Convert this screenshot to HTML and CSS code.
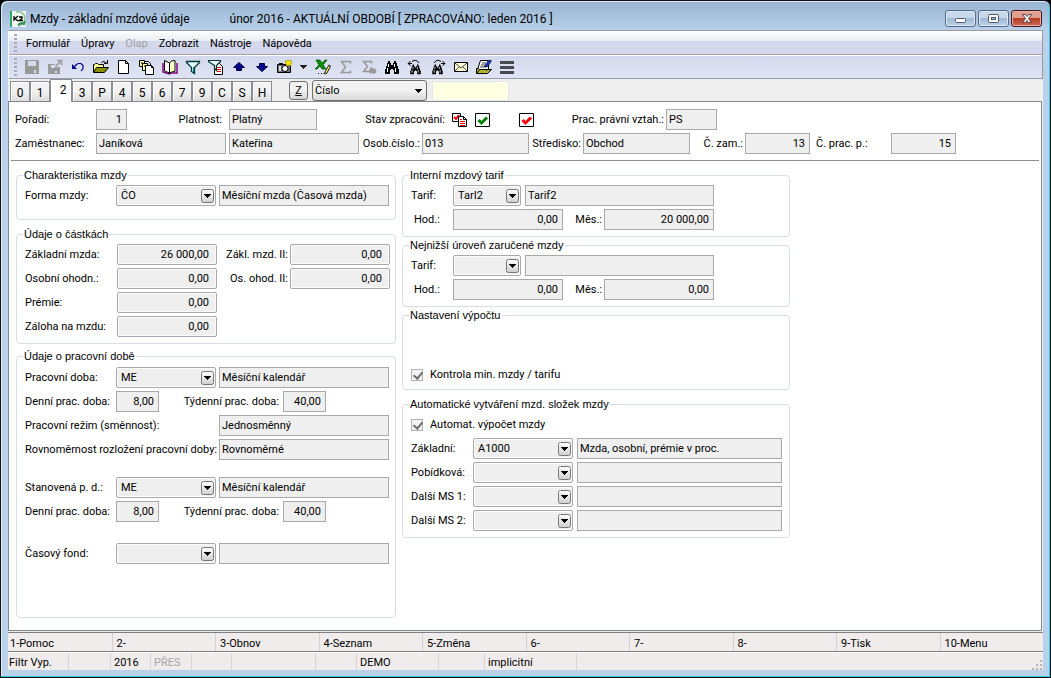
FILE: index.html
```html
<!DOCTYPE html>
<html lang="cs">
<head>
<meta charset="utf-8">
<title>Mzdy - základní mzdové údaje</title>
<link rel="stylesheet" href="styles.css">
</head>
<body>
<svg class="defs" aria-hidden="true">
  <defs>
    <linearGradient id="btn" x1="0" y1="0" x2="0" y2="1"><stop offset="0" stop-color="#fff"/><stop offset="1" stop-color="#cfcfcf"/></linearGradient>
    <symbol id="drop" viewBox="0 0 15 15"><rect x="1.500" y=".5" width="12" height="13" rx="2" fill="url(#btn)" stroke="#777" /><path d="M4 5h7v1h-1v1h-1v1h-1v1h-1v-1h-1v-1h-1v-1h-1z" fill="#000"/></symbol>
    <symbol id="bino" viewBox="0 0 16 16"><path d="M4 2h2v2h1v2h2v-2h1v-2h2v2h1v3h1v3h1v5h-5v-4h-1v-1h-2v1h-1v4h-5v-5h1v-3h1v-3h1z" fill="#000"/><path d="M4.500 5v3M3.500 9v4M10.500 5v3M11.500 9v4" stroke="#fff"/></symbol>
  </defs>
</svg>
<div class="window">
  <header class="titlebar">
    <svg class="logo" viewBox="0 0 16 16"><path d="M0 0h16v16h-16z" fill="#f4f8f5"/><path d="M0 0h2v16h-2z" fill="#2fa866"/><path d="M6 1c5-1 9 2 9 6s-2 7-7 8" fill="none" stroke="#9dc8a8" stroke-width="2"/><path d="M8 14l3-2 3 1 1-3" fill="none" stroke="#2f8f55" stroke-width="2"/><path d="M4 5v5M8 5l-3 2.500 3 2.500M9 6h3v1.500l-3 2h4" fill="none" stroke="#000" stroke-width="1.300"/></svg>
    <h1>Mzdy - základní mzdové údaje</h1>
    <span class="period">únor 2016 - AKTUÁLNÍ OBDOBÍ [ ZPRACOVÁNO: leden 2016 ]</span>
    <div class="winbtns">
      <button aria-label="Minimalizovat"><svg viewBox="0 0 29 15"><rect x="9.500" y="7.500" width="10" height="4" rx="1" fill="#fff" stroke="#555b6e"/></svg></button>
      <button aria-label="Maximalizovat"><svg viewBox="0 0 29 15"><rect x="9.500" y="3.500" width="10" height="8" rx="1" fill="#fff" stroke="#555b6e"/><rect x="12.500" y="6.500" width="4" height="2" fill="#9dbbdc" stroke="#555b6e"/></svg></button>
      <button class="close" aria-label="Zavřít"><svg viewBox="0 0 29 15"><path d="M10.500 3.500h3l1.500 2 1.500-2h3l-3 4 3 4h-3l-1.500-2-1.500 2h-3l3-4z" fill="#fff" stroke="#5a4450"/></svg></button>
    </div>
  </header>

  <div class="client">
    <div class="bars">
      <nav class="menubar">
        <i class="grip"></i>
        <button>Formulář</button><button>Úpravy</button><button disabled>Olap</button><button>Zobrazit</button><button>Nástroje</button><button>Nápověda</button>
      </nav>
      <div class="toolbar">
        <i class="grip"></i>
        <button aria-label="Uložit" disabled><svg viewBox="0 0 16 16"><path d="M1 1h13l1 1v13h-14z" fill="#999"/><path d="M4 2h8v5h-8zM10 11h2v3h-2z" fill="#d7dbee"/></svg></button>
        <button aria-label="Uložit jako" disabled><svg viewBox="0 0 16 16"><path d="M1 5h7v3h5v7h-12z" fill="#999"/><path d="M4 6h4v3h-4zM8 12h2v2h-2z" fill="#d7dbee"/><path d="M8.500 7.500l5-5M10 1.500h4.500v4.500" fill="none" stroke="#999" stroke-width="1.500"/></svg></button>
        <button aria-label="Zpět"><svg viewBox="0 0 16 16"><path d="M3 9l3-3 2-1.500h3l2 2v3l-2 2.500" fill="none" stroke="#000090" stroke-width="1.200"/><path d="M2 5v5h5z" fill="#000090"/></svg></button>
        <button aria-label="Otevřít"><svg viewBox="0 0 16 16"><path d="M.5 13.500v-8h1l1-1h2l1 1h5v3" fill="#ffff8c" stroke="#000"/><path d="M.5 13.500l3-5h12l-4 5z" fill="#8c8c00" stroke="#000"/><path d="M8.500 3.500q2-2.500 5 .5M14.500 1v3.500h-3.500" fill="none" stroke="#000"/></svg></button>
        <button aria-label="Nový"><svg viewBox="0 0 16 16"><path d="M2.500 1.500h7l3 3v10h-10z" fill="#fff" stroke="#000"/><path d="M9.500 1.500v3h3" fill="none" stroke="#000"/></svg></button>
        <button aria-label="Kopírovat"><svg viewBox="0 0 16 16"><path d="M.5 1.500h5v6h-5z" fill="#ffffa0" stroke="#000"/><path d="M3.500 4.500h5v7h-5z" fill="#ffffa0" stroke="#000"/><path d="M6.500 6.500h6l2 2v7h-8z" fill="#fff" stroke="#000"/><path d="M5.500 2.500h4l2 2v2M12.500 6.500v2h2M2 4h2M5 7h1" fill="none" stroke="#000"/></svg></button>
        <button aria-label="Kniha"><svg viewBox="0 0 16 16"><path d="M1 4v9l6 2 2-1h6v-10" fill="#fff" stroke="#800080" stroke-width="1.500"/><path d="M2.500 1.500l5 2.500v10l-5-2z" fill="#fff" stroke="#000"/><path d="M7.500 4q2-3 5.500-2.500v11q-3 0-5.500 1.500z" fill="#ffffc8" stroke="#000"/></svg></button>
        <button aria-label="Filtr"><svg viewBox="0 0 16 16"><path d="M1.500 2.500h13v1l-5 5v6l-3-2v-4l-5-5z" fill="#e8fbfb" stroke="#003838" stroke-width="1.300"/><path d="M8.500 8v5" stroke="#008080"/></svg></button>
        <button aria-label="Filtr dokladu"><svg viewBox="0 0 16 16"><path d="M6.500 4.500h5l3 3v8h-8z" fill="#fff" stroke="#000"/><path d="M9 8.500h4M9 10.500h4M9 12.500h4" stroke="#e00000"/><path d="M.5 1.500h12v1l-4 4v5l-2-2v-3l-6-4z" fill="#e8fbfb" stroke="#003838" stroke-width="1.200"/></svg></button>
        <button aria-label="Nahoru"><svg viewBox="0 0 16 16"><path d="M8 3.500l5.500 5h-3v3h-5v-3h-3z" fill="#000090" stroke="#000040"/></svg></button>
        <button aria-label="Dolů"><svg viewBox="0 0 16 16"><path d="M8 12.500l5.500-5h-3v-3h-5v3h-3z" fill="#000090" stroke="#000040"/></svg></button>
        <button aria-label="Snímek"><svg viewBox="0 0 16 16"><path d="M.5 5.500h13v8h-13z" fill="#707070" stroke="#000"/><path d="M2 4h4v2h-4z"/><path d="M2 7h2v5h-2z" fill="#ddd"/><circle cx="8" cy="9.500" r="3" fill="#fff" stroke="#000"/><path d="M8 2h2l1-1 1 1 2-1v2l1 1-1 1v2l-2-1-2 1-1-2z" fill="#ffe600" stroke="#8c8c00" stroke-width=".6"/></svg></button>
        <button class="mini" aria-label="Další snímky"><svg viewBox="0 0 8 16"><path d="M0 6h7v1h-1v1h-1v1h-1v1h-1v-1h-1v-1h-1v-1h-1z" fill="#222"/></svg></button>
        <button aria-label="Excel"><svg viewBox="0 0 16 16"><path d="M1 1h4l2 3 3-3h2l-4 5 3 4h-4l-2-3-3 3h-2l4-4z" fill="#009000" stroke="#004800" stroke-width=".7"/><path d="M10 13l4-7 1.500 1-3.500 7-2 1z" fill="#ffff60" stroke="#000" stroke-width=".9"/><path d="M3 14.500h1M6 14.500h1M8.500 14.500h1" stroke="#000"/></svg></button>
        <button aria-label="Součet" disabled><svg viewBox="0 0 16 16"><path d="M12.500 4.500v-2h-9l4 5.500-4 5.500h9v-2" fill="none" stroke="#999" stroke-width="1.500"/></svg></button>
        <button aria-label="Součet výběru" disabled><svg viewBox="0 0 16 16"><path d="M10.500 4.500v-2h-8l4 5-4 5h6" fill="none" stroke="#999" stroke-width="1.500"/><path d="M9 9l2-1 1 2 2-1 1 3 1 1-3 2-2-1-2 1-1-3z" fill="#999"/></svg></button>
        <button aria-label="Hledat"><svg viewBox="0 0 16 16"><use href="#bino"/></svg></button>
        <button aria-label="Hledat předchozí"><svg viewBox="0 0 16 16"><use href="#bino" x="2" y="4" width="13" height="12"/><path d="M1 4.500h4M3.500 2l-2.500 2.500 2.500 2M5 2.500q4-3 7 1.500" fill="none" stroke="#000"/></svg></button>
        <button aria-label="Hledat další"><svg viewBox="0 0 16 16"><use href="#bino" x="1" y="4" width="13" height="12"/><path d="M11 4.500h4M12.500 2l2.500 2.500-2.500 2M11 2.500q-4-3-7 1.500" fill="none" stroke="#000"/></svg></button>
        <button aria-label="Pošta"><svg viewBox="0 0 16 16"><path d="M1.500 3.500h13v9h-13z" fill="#ffffd8" stroke="#000"/><path d="M2 4l6 5 6-5M2 12l4-4M14 12l-4-4" fill="none" stroke="#444"/></svg></button>
        <button aria-label="Složka"><svg viewBox="0 0 16 16"><path d="M1.500 10.500l3-9h8v9z" fill="#fff" stroke="#000"/><path d="M6 4h4M5 6h4M4 8h4" stroke="#444"/><path d="M8 8l4-6 3-1v2l-4 5z" fill="#1838c0" stroke="#000" stroke-width=".6"/><path d="M.5 14.500v-5h2l1 1h7v1M.5 14.500l3-4h12l-4 4z" fill="#b4b432" stroke="#000"/></svg></button>
        <button aria-label="Nabídka"><svg viewBox="0 0 16 16"><path d="M1 2h14v3h-14zM1 7h14v3h-14zM1 12h14v3h-14z" fill="#484850"/></svg></button>
      </div>
    </div>

    <div class="tabrow">
      <div class="tabs" role="tablist">
        <button role="tab">0</button><button role="tab">1</button><button role="tab" class="active" aria-selected="true">2</button><button role="tab">3</button><button role="tab">P</button><button role="tab">4</button><button role="tab">5</button><button role="tab">6</button><button role="tab">7</button><button role="tab">9</button><button role="tab">C</button><button role="tab">S</button><button role="tab">H</button>
      </div>
      <button class="zbtn"><u>Z</u></button>
      <div class="sort"><select aria-label="Řazení"><option>Číslo</option></select><svg viewBox="0 0 7 4"><path d="M0 0h7v1h-1v1h-1v1h-1v1h-1v-1h-1v-1h-1v-1h-1z"/></svg></div>
      <input class="quick" type="text" aria-label="Rychlé hledání">
    </div>

    <main class="panel">
      <div class="head">
        <div class="row head1">
          <label for="poradi">Pořadí:</label><input id="poradi" class="num" value="1" readonly>
          <label for="platnost" class="r wide">Platnost:</label><input id="platnost" value="Platný" readonly>
          <span class="r wide">Stav zpracování:</span>
          <div class="states">
            <svg viewBox="0 0 16 16"><path d="M.5 1.500h8v8h-8z" fill="#fff" stroke="#000"/><path d="M2 5l2 2 3-4" fill="none" stroke="#f00" stroke-width="2"/><path d="M6.500 4.500h5l3 3v7h-8z" fill="#fff" stroke="#000"/><path d="M11.500 4.500v3h3" fill="none" stroke="#000"/><path d="M8 7.500h2M8 9.500h5M8 11.500h5M8 13.500h5" stroke="#f00"/></svg>
            <svg viewBox="0 0 16 16"><path d="M.5 1.500h14v13h-14z" fill="#fff" stroke="#000"/><path d="M3.500 8l3 3 5.500-5.500" fill="none" stroke="#008000" stroke-width="3"/></svg>
            <svg class="last" viewBox="0 0 16 16"><path d="M.5 1.500h14v13h-14z" fill="#fff" stroke="#000"/><path d="M3.500 8l3 3 5.500-5.500" fill="none" stroke="#f00" stroke-width="3"/></svg>
          </div>
          <label for="vztah" class="r">Prac. právní vztah.:</label><input id="vztah" value="PS" readonly>
        </div>
        <div class="row head2">
          <label for="prijmeni">Zaměstnanec:</label><input id="prijmeni" value="Janíková" readonly>
          <input class="next" aria-label="Jméno" value="Kateřina" readonly>
          <label for="osob" class="r">Osob.číslo.:</label><input id="osob" value="013" readonly>
          <label for="stred" class="r">Středisko:</label><input id="stred" value="Obchod" readonly>
          <label for="czam" class="r">Č. zam.:</label><input id="czam" class="num" value="13" readonly>
          <label for="cprac" class="lead">Č. prac. p.:</label><input id="cprac" class="num" value="15" readonly>
        </div>
      </div>

      <div class="groups">
        <div class="col left">
          <fieldset class="form-type">
            <legend>Charakteristika mzdy</legend>
            <div class="row code"><label for="forma">Forma mzdy:</label><div class="combo"><select id="forma"><option>ČO</option></select><svg><use href="#drop"/></svg></div><input aria-label="Forma mzdy, popis" value="Měsíční mzda (Časová mzda)" readonly></div>
          </fieldset>

          <fieldset class="amounts">
            <legend>Údaje o částkách</legend>
            <div class="row pair"><label for="zm">Základní mzda:</label><input id="zm" class="num" value="26 000,00" readonly><label for="zm2" class="r">Zákl. mzd. II:</label><input id="zm2" class="num" value="0,00" readonly></div>
            <div class="row pair"><label for="oo">Osobní ohodn.:</label><input id="oo" class="num" value="0,00" readonly><label for="oo2" class="r">Os. ohod. II:</label><input id="oo2" class="num" value="0,00" readonly></div>
            <div class="row pair"><label for="pr">Prémie:</label><input id="pr" class="num" value="0,00" readonly></div>
            <div class="row pair"><label for="za">Záloha na mzdu:</label><input id="za" class="num" value="0,00" readonly></div>
          </fieldset>

          <fieldset class="worktime">
            <legend>Údaje o pracovní době</legend>
            <div class="row code"><label for="pd">Pracovní doba:</label><div class="combo"><select id="pd"><option>ME</option></select><svg><use href="#drop"/></svg></div><input aria-label="Pracovní doba, popis" value="Měsíční kalendář" readonly></div>
            <div class="row hours"><label for="dd">Denní prac. doba:</label><input id="dd" class="num" value="8,00" readonly><label for="td" class="r">Týdenní prac. doba:</label><input id="td" class="num" value="40,00" readonly></div>
            <div class="row mode"><label for="re">Pracovní režim (směnnost):</label><input id="re" value="Jednosměnný" readonly></div>
            <div class="row mode"><label for="ro">Rovnoměrnost rozložení pracovní doby:</label><input id="ro" value="Rovnoměrné" readonly></div>
            <div class="row code block"><label for="st">Stanovená p. d.:</label><div class="combo"><select id="st"><option>ME</option></select><svg><use href="#drop"/></svg></div><input aria-label="Stanovená pracovní doba, popis" value="Měsíční kalendář" readonly></div>
            <div class="row hours"><label for="dd2">Denní prac. doba:</label><input id="dd2" class="num" value="8,00" readonly><label for="td2" class="r">Týdenní prac. doba:</label><input id="td2" class="num" value="40,00" readonly></div>
            <div class="row code block"><label for="cf">Časový fond:</label><div class="combo"><select id="cf"><option></option></select><svg><use href="#drop"/></svg></div><input aria-label="Časový fond, popis" readonly></div>
          </fieldset>
        </div>

        <div class="col">
          <fieldset class="tariff">
            <legend>Interní mzdový tarif</legend>
            <div class="row tcode"><label for="t1">Tarif:</label><div class="combo"><select id="t1"><option>TarI2</option></select><svg><use href="#drop"/></svg></div><input aria-label="Tarif, popis" value="Tarif2" readonly></div>
            <div class="row rates"><label for="h1">Hod.:</label><input id="h1" class="num" value="0,00" readonly><label for="m1" class="r">Měs.:</label><input id="m1" class="num" value="20 000,00" readonly></div>
          </fieldset>
          <fieldset class="minimum">
            <legend>Nejnižší úroveň zaručené mzdy</legend>
            <div class="row tcode"><label for="t2">Tarif:</label><div class="combo"><select id="t2"><option></option></select><svg><use href="#drop"/></svg></div><input aria-label="Tarif zaručené mzdy, popis" readonly></div>
            <div class="row rates"><label for="h2">Hod.:</label><input id="h2" class="num" value="0,00" readonly><label for="m2" class="r">Měs.:</label><input id="m2" class="num" value="0,00" readonly></div>
          </fieldset>
          <fieldset class="setup">
            <legend>Nastavení výpočtu</legend>
            <label class="check"><input type="checkbox" checked disabled>Kontrola min. mzdy / tarifu</label>
          </fieldset>
          <fieldset class="auto">
            <legend>Automatické vytváření mzd. složek mzdy</legend>
            <label class="check"><input type="checkbox" checked disabled>Automat. výpočet mzdy</label>
            <div class="row parts"><label for="a1">Základní:</label><div class="combo"><select id="a1"><option>A1000</option></select><svg><use href="#drop"/></svg></div><input aria-label="Základní, popis" value="Mzda, osobní, prémie v proc." readonly></div>
            <div class="row parts"><label for="a2">Pobídková:</label><div class="combo"><select id="a2"><option></option></select><svg><use href="#drop"/></svg></div><input aria-label="Pobídková, popis" readonly></div>
            <div class="row parts"><label for="a3">Další MS 1:</label><div class="combo"><select id="a3"><option></option></select><svg><use href="#drop"/></svg></div><input aria-label="Další MS 1, popis" readonly></div>
            <div class="row parts"><label for="a4">Další MS 2:</label><div class="combo"><select id="a4"><option></option></select><svg><use href="#drop"/></svg></div><input aria-label="Další MS 2, popis" readonly></div>
          </fieldset>
        </div>
      </div>
    </main>

    <div class="fkeys">
      <button>1-Pomoc</button><button>2-</button><button>3-Obnov</button><button>4-Seznam</button><button>5-Změna</button><button>6-</button><button>7-</button><button>8-</button><button>9-Tisk</button><button>10-Menu</button>
    </div>
    <footer class="status">
      <span>Filtr Vyp.</span><span></span><span>2016</span><span class="off">PŘES</span><span></span><span></span><span></span><span>DEMO</span><span></span><span>implicitní</span><span></span>
      <svg class="size" viewBox="0 0 12 12"><path d="M9 2h2v2h-2zM9 6h2v2h-2zM5 6h2v2h-2zM9 10h2v2h-2zM5 10h2v2h-2zM1 10h2v2h-2z" fill="#b8b4b4"/></svg>
    </footer>
  </div>
</div>
</body>
</html>
```

FILE: styles.css
```css
* { box-sizing: border-box; }

body {
  margin: 0;
  font: 11px/14px Roboto, sans-serif;
  color: #000;
  background: #000;
}

button, input, select {
  font: inherit;
  color: inherit;
  margin: 0;
}

.defs { position: absolute; width: 0; height: 0; }

.window {
  display: flex;
  flex-direction: column;
  min-height: 100vh;
  padding: 0 7px;
  border: 1px solid #101418;
  border-radius: 7px 7px 0 0;
  background: linear-gradient(#98b4d2, #b9d1ea 30px);
  box-shadow: inset -1px -1px 0 #35c6e4, inset 1px 1px 0 #e4eef8;
}

/* title bar */
.titlebar {
  display: flex;
  align-items: center;
  height: 29px;
  padding: 6px 1px 0 2px;
  font: 12px/16px Roboto, sans-serif;
}
.logo { width: 16px; height: 16px; margin-right: 4px; }
.titlebar h1 { margin: 0; font: inherit; }
.period { margin-left: 40px; }
.winbtns { display: flex; gap: 2px; margin-left: auto; }
.winbtns button {
  width: 31px;
  height: 17px;
  padding: 0;
  border: 1px solid #56688a;
  border-radius: 3px;
  background: linear-gradient(#c6d8ea 50%, #9fb9d4 50%, #bcd2e8);
  box-shadow: inset 0 0 0 1px #dbe8f5;
}
.winbtns .close {
  border-color: #4a1420;
  background: linear-gradient(#e0a090 50%, #b83c22 50%, #d06a50);
  box-shadow: inset 0 0 0 1px #e8b0a4;
}
.winbtns svg { display: block; width: 29px; height: 15px; }

.client {
  display: flex;
  flex: 1;
  flex-direction: column;
  margin-bottom: 7px;
  background: #efefef;
}

/* menu and toolbar */
.bars { border: 1px solid #9a9a9a; border-left-color: #fff; border-bottom-color: #9a9ca8; }
.menubar, .toolbar { display: flex; align-items: center; height: 24px; padding-left: 5px; }
.menubar { background: linear-gradient(#fff, #e8edf6 10px, #d3d8ec 10px); border-bottom: 1px solid #a4a4a8; }
.toolbar { height: 23px; background: linear-gradient(#fff 1px, #d3d8ec 1px, #dfe4f5); }
.grip { width: 3px; height: 18px; background: repeating-linear-gradient(#aab 0 2px, transparent 2px 4px); }
.menubar button { padding: 3px 5px 0; border: 0; background: none; }
.menubar { gap: 1px; }
.menubar .grip { margin-right: 3px; }
.menubar button:disabled { color: #a0a0a0; }
.toolbar { gap: 7px; }
.toolbar button { width: 16px; height: 16px; padding: 0; border: 0; background: none; }
.toolbar .mini { width: 8px; }
.toolbar svg { display: block; width: 100%; height: 16px; }

/* tab strip */
.tabrow { display: flex; align-items: flex-end; height: 22px; padding-left: 2px; }
.tabs { display: flex; align-items: flex-end; margin-right: 17px; }
.tabs button {
  width: 20px;
  height: 20px;
  padding: 3px 0 0;
  border: 1px solid #8a8c98;
  border-width: 1px 1px 0 1px;
  background: linear-gradient(#f2f2f2 50%, #dcdcdc);
  box-shadow: inset 1px 1px 0 #fff;
  font-size: 12px;
  line-height: 16px;
}
.tabs .active { width: 22px; height: 23px; margin-bottom: -1px; padding: 0 0 2px 4px; background: #fff; z-index: 1; }
.zbtn {
  width: 19px;
  height: 19px;
  margin: 0 4px 1px 0;
  padding: 0;
  border: 1px solid #707070;
  border-radius: 3px;
  background: linear-gradient(#f2f2f2 50%, #d4d4d4);
}
.sort { position: relative; width: 115px; height: 21px; margin-right: 5px; }
.sort select {
  width: 100%;
  height: 21px;
  padding: 0 2px;
  appearance: none;
  border: 1px solid #707070;
  border-radius: 3px;
  background: linear-gradient(#f2f2f2 50%, #d8d8d8);
}
.sort svg { position: absolute; right: 5px; top: 9px; width: 7px; height: 4px; pointer-events: none; }
.quick { width: 77px; height: 20px; border: 1px solid #e3e9ef; background: #ffffe1; }

/* form panel */
.panel { flex: 1; margin-right: 1px; border: 1px solid #828790; background: #fff; }
.row { display: grid; align-items: center; min-height: 21px; white-space: nowrap; }
.row input {
  width: 100%;
  height: 21px;
  min-width: 0;
  padding: 0 2px;
  border: 1px solid #a9a9a9;
  background: #efefef;
}
.row .num { padding-right: 4px; text-align: right; }
.r { padding-right: 2px; text-align: right; }
.wide { padding-right: 7px; }
.lead { padding-left: 6px; }

.head {
  display: flex;
  flex-direction: column;
  gap: 3px;
  margin: 0 2px;
  padding: 7px 4px 6px;
  border-bottom: 1px solid #8f8f8f;
}
.head1 { grid-template-columns: 81px 31px 102px 88px 135px 83px 131px 51px; }
.head2 { grid-template-columns: 81px 130px 133px 63px 107px 54px 107px 55px 65px 81px 65px; }
.head2 .next { width: 130px; margin-left: 3px; }
.states { display: flex; }
.states svg { width: 16px; height: 16px; margin-right: 7px; }
.states .last { margin: 0 0 0 21px; }

.groups { display: flex; align-items: flex-start; gap: 6px; padding: 7px 7px 12px; }
.col { display: flex; flex-direction: column; }
fieldset {
  display: flex;
  flex-direction: column;
  gap: 3px;
  margin: 0;
  padding: 3px 7px 6px 8px;
  min-width: 0;
  border: 1px solid #d5dfe5;
  border-radius: 4px;
}
.left fieldset { padding-right: 5px; }
legend { padding: 0 1px; margin-left: -2px; font: 11px/14px "Liberation Sans", sans-serif; }

.form-type { min-height: 52px; margin-bottom: 7px; }
.amounts { margin-bottom: 5px; }
.worktime { min-height: 269px; padding-top: 4px; }
.tariff { margin-bottom: 1px; }
.minimum { margin-bottom: 1px; }
.setup { padding-top: 42px; padding-bottom: 4px; margin-bottom: 7px; }

.code { grid-template-columns: 91px 100px 173px; }
.code input, .tcode input, .parts input { justify-self: end; }
.code input { width: 170px; }
.pair { grid-template-columns: 92px 100px 73px 100px; }
.hours { grid-template-columns: 91px 43px 124px 43px; }
.hours .r { padding-right: 4px; }
.mode { grid-template-columns: 194px 170px; }
.block { margin-top: 14px; }
.hours + .block { margin-top: 18px; }
.tcode { grid-template-columns: 42px 68px 193px; }
.tcode input { width: 189px; }
.rates { grid-template-columns: 42px 110px 41px 110px; }
.rates label:first-child { padding-left: 3px; }
.parts { grid-template-columns: 62px 100px 209px; }
.parts input { width: 205px; }
.pair input { border-radius: 2px; box-shadow: inset 0 0 0 1px #fff; }
.pair .num { padding-right: 7px; }

.combo { position: relative; }
.combo select {
  display: block;
  width: 100%;
  height: 21px;
  padding: 0 18px 0 4px;
  appearance: none;
  border: 1px solid #a9a9a9;
  border-radius: 2px;
  background: #efefef;
  box-shadow: inset 0 0 0 1px #fff;
}
.combo svg { position: absolute; right: 1px; top: 4px; width: 15px; height: 15px; pointer-events: none; }

.check { display: flex; align-items: center; gap: 7px; height: 21px; }
.check input {
  width: 12px;
  height: 12px;
  appearance: none;
  border: 1px solid #b1b1b1;
  background: #f4f4f4;
}
.check input::before {
  content: "";
  display: block;
  width: 4px;
  height: 7px;
  margin: 0 0 0 3px;
  border: solid #6f6f6f;
  border-width: 0 2px 2px 0;
  transform: rotate(40deg);
}

/* function keys and status */
.fkeys {
  display: grid;
  grid-template-columns: repeat(10, 1fr);
  margin-top: 1px;
  border-top: 1px solid #808080;
  border-bottom: 1px solid #808080;
  background: #f0ecec;
}
.fkeys button {
  height: 18px;
  padding: 3px 0 0 4px;
  border: 0;
  border-left: 1px solid #d2d0d0;
  background: none;
  text-align: left;
}
.fkeys button:first-child { padding-left: 2px; border-left: 0; }
.status {
  display: grid;
  grid-template-columns: 60px 42px 40px 41px 40px 84px 41px 82px 46px 92px 1fr 12px;
  align-items: end;
  height: 18px;
  background: #f0ecec;
  border-top: 1px solid #fff;
}
.status span { height: 17px; padding: 1px 0 0 3px; border-left: 1px solid #d6d4d4; line-height: 17px; }
.status span:first-child { padding-left: 1px; border: 0; }
.status .off { color: #a8a4a4; }
.size { width: 12px; height: 12px; }
```
